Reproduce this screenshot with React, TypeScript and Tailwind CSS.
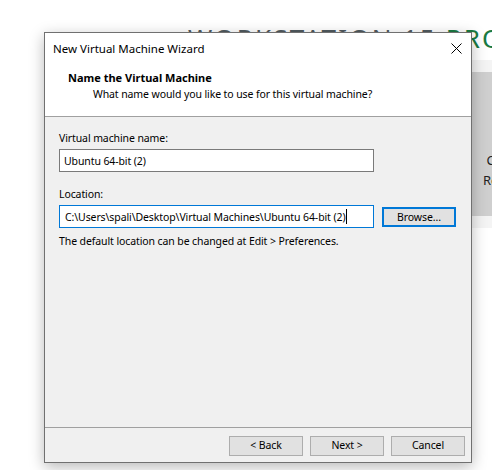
import React from "react";

const font = { fontFamily: '"Noto Sans", "Open Sans", sans-serif' };

function Btn({ children, primary = false }: { children: React.ReactNode; primary?: boolean }) {
  return (
    <div
      className={
        "flex h-[20px] w-[74px] items-center justify-center bg-[#e1e1e1] text-[10.5px] tracking-[-0.1px] text-black " +
        (primary ? "border-2 border-[#0078d7]" : "border border-[#adadad]")
      }
    >
      {children}
    </div>
  );
}

export default function App() {
  return (
    <div className="relative h-[470px] w-[492px] overflow-hidden bg-white" style={font}>
      {/* product banner behind the wizard */}
      <div className="absolute left-[188px] top-[20px] whitespace-nowrap text-[26px] leading-[36px] tracking-[2.2px]">
        <span className="text-[#505a5f]">WORKSTATION 15 </span>
        <span className="text-[#1a7a42]">PRO</span>
      </div>
      <div className="absolute left-[440px] top-[60px] flex h-[168px] w-[60px] flex-col bg-[#f4f4f4] py-[12px]">
        <div className="relative flex-1 bg-[#cfcfcf]">
          <div className="absolute left-[43px] top-[78px] flex flex-col items-center text-[13px] leading-[20px] text-[#222]">
            <span>C</span>
            <span>Re</span>
          </div>
        </div>
      </div>

      {/* wizard window */}
      <div className="relative ml-[44px] mt-[32px] flex h-[431px] w-[428px] flex-col border border-[#707070] bg-[#f0f0f0] shadow-[0_4px_14px_rgba(0,0,0,0.28)]">
        <div className="flex h-[30px] items-center justify-between bg-white pl-[8px] pr-[9px] text-[11.5px] text-black">
          <span className="pt-[1px]">New Virtual Machine Wizard</span>
          <svg width="11" height="11" viewBox="0 0 11 11">
            <path d="M0.5 0.5 L10.5 10.5 M10.5 0.5 L0.5 10.5" stroke="#000" strokeWidth="1" />
          </svg>
        </div>
        <div className="flex h-[54px] flex-col border-b border-[#a0a0a0] bg-white pl-[23px] pt-[7px] text-[10.5px] leading-[16px] tracking-[-0.1px] text-black">
          <span className="text-[11px] font-bold tracking-normal">Name the Virtual Machine</span>
          <span className="pl-[25px]">What name would you like to use for this virtual machine?</span>
        </div>

        <div className="flex flex-1 flex-col px-[14px] pt-[13px] text-[10.5px] leading-[16px] tracking-[-0.1px] text-black">
          <span>Virtual machine name:</span>
          <div className="mt-[3px] flex h-[23px] w-[315px] items-center border border-[#7a7a7a] bg-white pl-[4px]">
            Ubuntu 64-bit (2)
          </div>
          <span className="mt-[14px]">Location:</span>
          <div className="mt-[3px] flex items-center gap-[8px]">
            <div className="flex h-[23px] w-[315px] items-center whitespace-nowrap border border-[#0078d7] bg-white pl-[5px]">
              <span>C:\Users\spali\Desktop\Virtual Machines\Ubuntu 64-bit (2)</span>
              <span className="ml-[1px] h-[15px] w-[1px] bg-black" />
            </div>
            <Btn primary>Browse...</Btn>
          </div>
          <span className="mt-[5px]">The default location can be changed at Edit &gt; Preferences.</span>
        </div>

        <div className="flex h-[35px] items-start justify-end gap-[7px] border-t border-[#a0a0a0] pr-[6px] pt-[8px]">
          <Btn>&lt; Back</Btn>
          <Btn>Next &gt;</Btn>
          <Btn>Cancel</Btn>
        </div>
      </div>
    </div>
  );
}
